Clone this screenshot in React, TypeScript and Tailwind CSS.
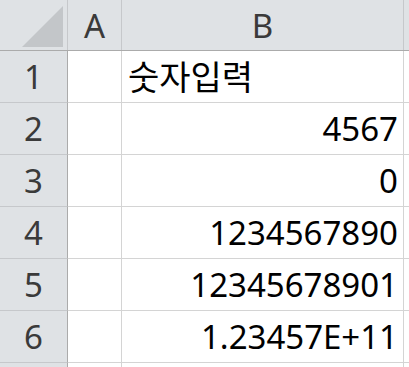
import React from "react";

const font = { fontFamily: '"Noto Sans", "Noto Sans CJK KR", sans-serif' };

const rows: { n: number | null; b: string; align: "left" | "right" }[] = [
  { n: 1, b: "숫자입력", align: "left" },
  { n: 2, b: "4567", align: "right" },
  { n: 3, b: "0", align: "right" },
  { n: 4, b: "1234567890", align: "right" },
  { n: 5, b: "12345678901", align: "right" },
  { n: 6, b: "1.23457E+11", align: "right" },
  { n: null, b: "", align: "right" },
];

export default function App() {
  return (
    <div className="w-[409px] h-[367px] overflow-hidden bg-white" style={font}>
      <div className="flex h-[51px] bg-[#dfe2e5] border-b border-[#ababab] box-border">
        <div className="w-[68px] shrink-0 border-r border-[#c6c8cb] relative">
          <svg width="68" height="50" className="absolute left-0 top-0">
            <polygon points="63,6 63,47 22,47" fill="#c3c6c9" />
          </svg>
        </div>
        <div className="w-[54px] shrink-0 border-r border-[#c6c8cb] flex items-center justify-center text-[33px] text-[#3a3a3a] leading-none">
          A
        </div>
        <div className="w-[282px] shrink-0 border-r border-[#c6c8cb] flex items-center justify-center text-[33px] text-[#3a3a3a] leading-none">
          B
        </div>
        <div className="flex-1" />
      </div>
      {rows.map((r, i) => (
        <div key={i} className="flex h-[52px]">
          <div className="w-[68px] shrink-0 bg-[#dfe2e5] border-r border-b border-r-[#ababab] border-b-[#c6c8cb] flex items-center justify-center text-[33px] text-[#3a3a3a] leading-none">
            {r.n}
          </div>
          <div className="w-[54px] shrink-0 border-r border-b border-[#d4d4d4]" />
          <div
            className={
              "w-[282px] shrink-0 border-r border-b border-[#d4d4d4] flex items-center text-black leading-none " +
              (r.align === "left" ? "justify-start pl-[6px] text-[34px]" : "justify-end pr-[5px] text-[33px]")
            }
          >
            {r.b}
          </div>
          <div className="flex-1 border-b border-[#d4d4d4]" />
        </div>
      ))}
    </div>
  );
}
